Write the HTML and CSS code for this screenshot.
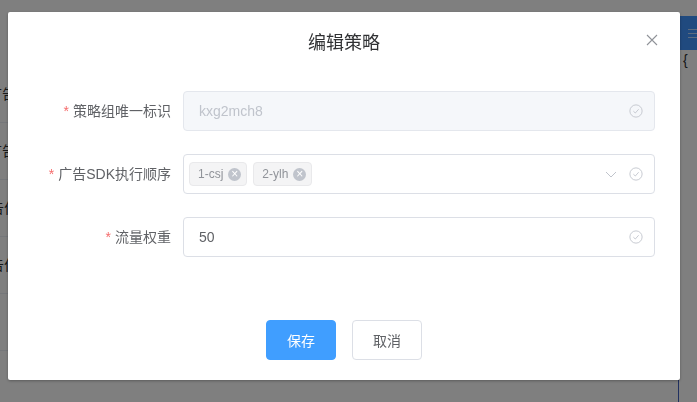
FILE: index.html
```html
<!DOCTYPE html>
<html lang="zh-CN">
<head>
  <meta charset="UTF-8" />
  <title>编辑策略</title>
  <link rel="stylesheet" href="styles.css">
</head>
<body>
  <div class="page">
    <div class="table-col">
      <div class="cell">广告</div>
      <div class="cell">广告</div>
      <div class="cell">广告位</div>
      <div class="cell">广告位</div>
      <div class="cell"></div>
      <div class="cell"></div>
    </div>
    <div class="side-col">
      <div class="menu-btn">
        <span></span><span></span><span></span>
      </div>
      <div class="brace">{</div>
      <div class="side-line"></div>
    </div>
  </div>

  <div class="overlay">
    <div class="dialog">
      <div class="dialog-header">
        <span class="dialog-title">编辑策略</span>
        <svg class="dialog-close" viewBox="0 0 12 12" width="12" height="12">
          <path d="M1 1 L11 11 M11 1 L1 11" stroke="#909399" stroke-width="1.1" fill="none" />
        </svg>
      </div>

      <div class="dialog-body">
        <div class="form-item">
          <label class="form-label"><i class="star">*</i>策略组唯一标识</label>
          <div class="input disabled">
            <span class="input-text placeholder">kxg2mch8</span>
            <svg class="icon-check" viewBox="0 0 16 16" width="14" height="14">
              <circle cx="8" cy="8" r="7" stroke="#c0c4cc" stroke-width="1" fill="none" />
              <path d="M5 8.2 L7.2 10.3 L11 6" stroke="#c0c4cc" stroke-width="1" fill="none" />
            </svg>
          </div>
        </div>

        <div class="form-item">
          <label class="form-label"><i class="star">*</i>广告SDK执行顺序</label>
          <div class="input">
            <div class="tags">
              <span class="tag">1-csj<i class="tag-close">×</i></span>
              <span class="tag">2-ylh<i class="tag-close">×</i></span>
            </div>
            <svg class="icon-arrow" viewBox="0 0 14 14" width="14" height="14">
              <path d="M2 5 L7 10 L12 5" stroke="#c0c4cc" stroke-width="1" fill="none" />
            </svg>
            <svg class="icon-check" viewBox="0 0 16 16" width="14" height="14">
              <circle cx="8" cy="8" r="7" stroke="#c0c4cc" stroke-width="1" fill="none" />
              <path d="M5 8.2 L7.2 10.3 L11 6" stroke="#c0c4cc" stroke-width="1" fill="none" />
            </svg>
          </div>
        </div>

        <div class="form-item">
          <label class="form-label"><i class="star">*</i>流量权重</label>
          <div class="input">
            <span class="input-text">50</span>
            <svg class="icon-check" viewBox="0 0 16 16" width="14" height="14">
              <circle cx="8" cy="8" r="7" stroke="#c0c4cc" stroke-width="1" fill="none" />
              <path d="M5 8.2 L7.2 10.3 L11 6" stroke="#c0c4cc" stroke-width="1" fill="none" />
            </svg>
          </div>
        </div>
      </div>

      <div class="dialog-footer">
        <button class="btn btn-primary">保存</button>
        <button class="btn">取消</button>
      </div>
    </div>
  </div>
</body>
</html>
```

FILE: styles.css
```css
body {
  margin: 0;
  width: 697px;
  height: 402px;
  overflow: hidden;
  font-family: "Liberation Sans", "Noto Sans CJK SC", sans-serif;
  background-color: #ffffff;
}
.page {
  display: flex;
  justify-content: space-between;
  height: 402px;
}
.table-col {
  width: 40px;
  margin-left: -24px;
  padding-top: 66px;
}
.cell {
  height: 56px;
  border-bottom: 1px solid #ebeef5;
  font-size: 14px;
  line-height: 56px;
  color: #303133;
  text-align: right;
  white-space: nowrap;
  overflow: hidden;
}
.side-col {
  width: 17px;
  padding-top: 16px;
  position: relative;
}
.menu-btn {
  height: 34px;
  background-color: #4194ff;
  display: flex;
  flex-direction: column;
  align-items: flex-end;
  justify-content: center;
  gap: 3px;
}
.menu-btn span {
  display: block;
  width: 9px;
  height: 1px;
  background-color: #b8d6ff;
}
.brace {
  font-size: 14px;
  color: #303133;
  padding-left: 3px;
  line-height: 20px;
}
.side-line {
  position: absolute;
  left: -2px;
  bottom: 0;
  width: 1px;
  height: 22px;
  background-color: #4060c0;
}
.overlay {
  position: fixed;
  top: 0;
  left: 0;
  right: 0;
  bottom: 0;
  background-color: rgba(0, 0, 0, 0.5);
}
.dialog {
  width: 672px;
  height: 368px;
  margin: 12px 0 0 8px;
  background-color: #ffffff;
  border-radius: 2px;
  box-shadow: 0 1px 3px rgba(0, 0, 0, 0.3);
  box-sizing: border-box;
  display: flex;
  flex-direction: column;
}
.dialog-header {
  position: relative;
  padding: 19px 20px 10px;
  text-align: center;
}
.dialog-title {
  font-size: 18px;
  line-height: 24px;
  color: #303133;
}
.dialog-close {
  position: absolute;
  top: 22px;
  right: 22px;
}
.dialog-body {
  padding: 26px 25px 0 20px;
  flex-grow: 1;
}
.form-item {
  display: flex;
  align-items: center;
  margin-bottom: 23px;
}
.form-label {
  width: 155px;
  padding-right: 12px;
  box-sizing: border-box;
  text-align: right;
  font-size: 14px;
  color: #606266;
  line-height: 40px;
}
.star {
  font-style: normal;
  color: #f56c6c;
  margin-right: 4px;
}
.input {
  flex-grow: 1;
  height: 40px;
  box-sizing: border-box;
  border: 1px solid #dcdfe6;
  border-radius: 4px;
  display: flex;
  align-items: center;
  padding: 0 11px 0 15px;
  font-size: 14px;
  color: #606266;
}
.input.disabled {
  background-color: #f5f7fa;
  border-color: #e4e7ed;
}
.input-text {
  flex-grow: 1;
}
.placeholder {
  color: #c0c4cc;
}
.tags {
  flex-grow: 1;
  display: flex;
  gap: 6px;
  margin-left: -10px;
}
.tag {
  display: flex;
  align-items: center;
  height: 24px;
  padding: 0 5px 0 8px;
  box-sizing: border-box;
  background-color: #f4f4f5;
  border: 1px solid #e9e9eb;
  border-radius: 4px;
  color: #909399;
  font-size: 12px;
}
.tag-close {
  font-style: normal;
  width: 13px;
  height: 13px;
  margin-left: 5px;
  border-radius: 50%;
  background-color: #c0c4cc;
  color: #ffffff;
  font-size: 12px;
  line-height: 13px;
  text-align: center;
}
.icon-arrow {
  margin-right: 11px;
}
.dialog-footer {
  display: flex;
  justify-content: center;
  gap: 16px;
  padding: 0 20px 20px;
}
.btn {
  width: 70px;
  height: 40px;
  border: 1px solid #dcdfe6;
  border-radius: 4px;
  background-color: #ffffff;
  color: #606266;
  font-size: 14px;
  font-family: inherit;
}
.btn-primary {
  background-color: #409eff;
  border-color: #409eff;
  color: #ffffff;
}
```
